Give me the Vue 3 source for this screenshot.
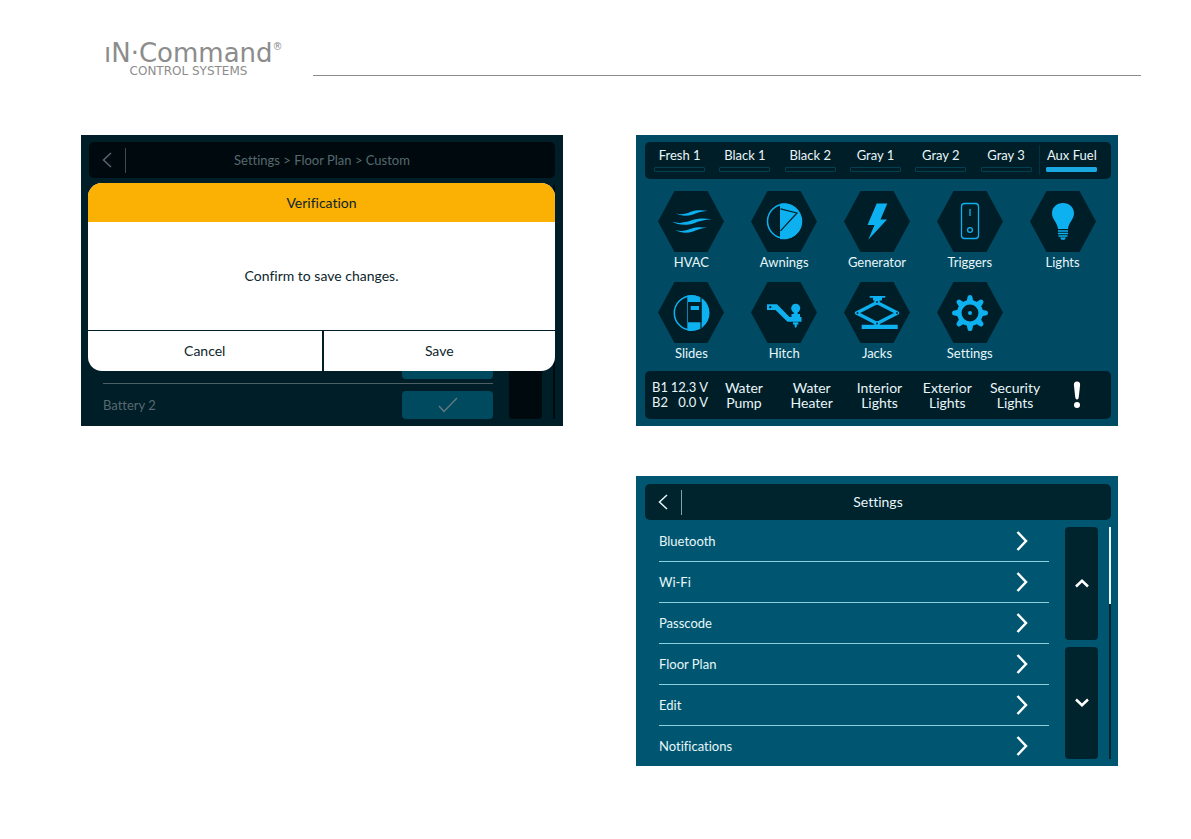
<template>
  <div class="page">
    <header class="page-header">
      <div class="brand">
        <div class="brand-name">ıN·Command<sup class="brand-mark">®</sup></div>
        <div class="brand-sub">CONTROL SYSTEMS</div>
      </div>
      <div class="page-rule"></div>
    </header>

    <main class="screens">
      <!-- Confirmation over the floor plan list -->
      <section class="screen screen-dimmed">
        <div class="title-bar">
          <button class="back" type="button" aria-label="Back">
            <svg width="10" height="16" viewBox="0 0 10 16"><path d="M9 1 L1.5 8 L9 15" /></svg>
          </button>
          <h2 class="title">Settings &gt; Floor Plan &gt; Custom</h2>
        </div>
        <div class="list-area">
          <ul class="list list-bottom">
            <li class="row"><span class="toggle"></span></li>
            <li class="row">
              <span>Battery 2</span>
              <button class="toggle" type="button" aria-label="Battery 2">
                <svg width="20" height="16" viewBox="0 0 20 16"><path d="M1 9 L6 14.5 L19 1" /></svg>
              </button>
            </li>
          </ul>
          <div class="keys"><div class="key"></div></div>
          <div class="track"></div>
        </div>

        <div class="modal" role="dialog" aria-labelledby="modal-title">
          <h3 id="modal-title" class="modal-title">Verification</h3>
          <p class="modal-text">Confirm to save changes.</p>
          <div class="modal-actions">
            <button class="modal-button" type="button">Cancel</button>
            <button class="modal-button" type="button">Save</button>
          </div>
        </div>
      </section>

      <!-- Home -->
      <section class="screen screen-home">
        <div class="tanks">
          <div v-for="tank in tanks" :key="tank.name" class="tank" :class="{ fuel: tank.fuel }">
            <span>{{ tank.name }}</span>
            <div class="gauge">
              <div class="gauge-level" :style="{ width: tank.level + '%' }"></div>
            </div>
          </div>
        </div>

        <nav class="tiles">
          <button v-for="tile in tiles" :key="tile" class="tile" type="button">
            <svg class="hex" width="66" height="61" viewBox="0 0 66 61">
              <polygon class="hex-bg" points="16.5,0 49.5,0 66,30.5 49.5,61 16.5,61 0,30.5" />
              <g v-if="tile === 'HVAC'">
                <path d="M17.5 22.3 C24 24.5 28 22.5 33 20.8 C38 19 43 19 49.5 19.8 C43 20.5 39 22 35 23.4 C29 25.3 23 25.3 17.5 22.3 Z" />
                <path d="M14 30.8 C22 33 27 31.5 33 29.6 C40 27.3 46 27.2 53.5 28.3 C46 28.9 41 30.3 36 32.2 C29 34.6 20 34.4 14 30.8 Z" />
                <path d="M17.5 39 C24 41 28 39.3 33 37.8 C38 36 43 36 49 36.8 C43 37.4 39 39 35 40.4 C29 42.3 23 42.2 17.5 39 Z" />
              </g>
              <g v-else-if="tile === 'Awnings'">
                <circle class="line" cx="33.5" cy="30.3" r="17" />
                <path d="M29 12.7 A18 18 0 1 1 29 47.9 Z" />
                <path class="cut" d="M29.5 17.8 L46 22 L29.5 39.8" />
              </g>
              <path
                v-else-if="tile === 'Generator'"
                d="M32.7 12.5 H43.3 L36.5 28.5 H43 L24.3 48.7 L30.5 34 H23.5 Z"
              />
              <g v-else-if="tile === 'Triggers'">
                <rect class="thin" x="24.5" y="12.5" width="17" height="35" rx="3" />
                <path class="thin" d="M33 18 V25" />
                <circle class="thin" cx="33" cy="39" r="2.4" />
              </g>
              <g v-else-if="tile === 'Lights'">
                <path d="M33 12 C26.5 12 22 16.6 22 22.5 C22 28.5 27.5 31.5 28 38 H38 C38.5 31.5 44 28.5 44 22.5 C44 16.6 39.5 12 33 12 Z" />
                <path class="thin" d="M28 40 H38 M28 42.5 H38 M28.5 45 H37.5" />
                <path d="M30 46.5 H36 L34.5 48.7 H31.5 Z" />
              </g>
              <g v-else-if="tile === 'Slides'">
                <circle class="line" cx="33.3" cy="31" r="17" />
                <path d="M29.3 13.5 A18 18 0 1 1 29.3 48.5 Z" />
                <path class="hex-bg" d="M30 20 H42 Q43.5 20 43.5 21.5 V40.3 H30 Z" />
                <path class="cut" d="M43 15.5 V46.5" />
                <rect x="32.7" y="24" width="8.3" height="4" />
              </g>
              <g v-else-if="tile === 'Hitch'">
                <path d="M16 22.3 H26 L38.5 35 H50.5 V39.7 H36.5 L24.5 28 H16 Z" />
                <circle cx="44.7" cy="26.2" r="4.5" />
                <path d="M42.7 29.5 H46.7 V32 H49 V35.5 H40.5 V32 H42.7 Z" />
                <path d="M42 40.3 H47.4 V42.5 H45.8 V44.5 L44.7 46 L43.6 44.5 V42.5 H42 Z" />
                <circle class="hex-bg" cx="19.3" cy="25.2" r="1.1" />
              </g>
              <g v-else-if="tile === 'Jacks'">
                <path d="M25.7 14 H41.3 V15.7 H38 V18.5 H29 V15.7 H25.7 Z M17.7 42.7 H53.7 V47 H17.7 Z" />
                <path class="beam" d="M33 20.5 L53.5 31 L33 41.5 L12.5 31 Z" />
                <circle cx="33" cy="20" r="2.8" />
                <circle cx="33" cy="42" r="2.8" />
                <g class="hex-bg">
                  <circle cx="33" cy="20" r="0.9" />
                  <circle cx="33" cy="41.5" r="0.9" />
                  <circle cx="13.5" cy="31" r="0.9" />
                  <circle cx="53" cy="31" r="0.9" />
                </g>
              </g>
              <g v-else>
                <path
                  v-for="n in 8"
                  :key="n"
                  :transform="`rotate(${n * 45} 33 31)`"
                  d="M29.5 20 L30.7 14.5 Q31 13 33 13 Q35 13 35.3 14.5 L36.5 20 Z"
                />
                <circle class="ring" cx="33" cy="31" r="10.7" />
                <circle cx="33" cy="31" r="2" />
              </g>
            </svg>
            <span>{{ tile }}</span>
          </button>
        </nav>

        <div class="status">
          <table class="batteries">
            <tbody>
              <tr v-for="b in batteries" :key="b.name">
                <th scope="row">{{ b.name }}</th>
                <td>{{ b.volts }} V</td>
              </tr>
            </tbody>
          </table>
          <button v-for="s in switches" :key="s.join()" class="switch" type="button">
            {{ s[0] }}<br />{{ s[1] }}
          </button>
          <button class="switch alert" type="button" aria-label="Alerts">
            <svg width="8" height="28" viewBox="0 0 8 28">
              <path d="M4 0.5 Q7.3 0.5 7.1 4 L5.8 16 Q5.5 18.5 4 18.5 Q2.5 18.5 2.2 16 L0.9 4 Q0.7 0.5 4 0.5 Z" />
              <circle cx="4" cy="24" r="3" />
            </svg>
          </button>
        </div>
      </section>

      <!-- Settings -->
      <section class="screen screen-settings">
        <div class="title-bar">
          <button class="back" type="button" aria-label="Back">
            <svg width="10" height="16" viewBox="0 0 10 16"><path d="M9 1 L1.5 8 L9 15" /></svg>
          </button>
          <h2 class="title">Settings</h2>
        </div>
        <div class="list-area">
          <ul class="list">
            <li v-for="item in settings" :key="item" class="row">
              <a class="row-link" href="#">
                <span>{{ item }}</span>
                <svg width="12" height="20" viewBox="0 0 12 20"><path d="M1.5 1 L10 10 L1.5 19" /></svg>
              </a>
            </li>
          </ul>
          <div class="keys">
            <button class="key" type="button" aria-label="Scroll up">
              <svg width="14" height="9" viewBox="0 0 14 9"><path d="M1 7.5 L7 1.8 L13 7.5" /></svg>
            </button>
            <button class="key" type="button" aria-label="Scroll down">
              <svg width="14" height="9" viewBox="0 0 14 9"><path d="M1 1.5 L7 7.2 L13 1.5" /></svg>
            </button>
          </div>
          <div class="track"><div class="thumb"></div></div>
        </div>
      </section>
    </main>
  </div>
</template>

<script setup>
const tanks = [
  { name: 'Fresh 1', level: 0 },
  { name: 'Black 1', level: 0 },
  { name: 'Black 2', level: 0 },
  { name: 'Gray 1', level: 0 },
  { name: 'Gray 2', level: 0 },
  { name: 'Gray 3', level: 0 },
  { name: 'Aux Fuel', level: 100, fuel: true },
]

const tiles = [
  'HVAC',
  'Awnings',
  'Generator',
  'Triggers',
  'Lights',
  'Slides',
  'Hitch',
  'Jacks',
  'Settings',
]

const batteries = [
  { name: 'B1', volts: '12.3' },
  { name: 'B2', volts: '0.0' },
]

const switches = [
  ['Water', 'Pump'],
  ['Water', 'Heater'],
  ['Interior', 'Lights'],
  ['Exterior', 'Lights'],
  ['Security', 'Lights'],
]

const settings = ['Bluetooth', 'Wi-Fi', 'Passcode', 'Floor Plan', 'Edit', 'Notifications']
</script>

<style>
body {
  margin: 0;
  background: #fff;
}
</style>

<style scoped>
.page {
  box-sizing: border-box;
  padding: 40px 73px 40px 81px;
  font-family: Lato, 'Noto Sans', sans-serif;
  font-size: 13px;
  font-variant-ligatures: none;
  line-height: 20px;
}

button {
  padding: 0;
  border: 0;
  background: none;
  color: inherit;
  font: inherit;
  font-variant-ligatures: none;
  cursor: pointer;
}

svg {
  display: block;
}

/* Header */
.page-header {
  display: flex;
  align-items: flex-end;
  gap: 30px;
  height: 36px;
  margin: 0 -23px 59px 23px;
}

.brand {
  width: 179px;
  color: #8c8c8c;
  font-family: 'DejaVu Sans', sans-serif;
  white-space: nowrap;
}

.brand-name {
  display: flex;
  font-size: 26px;
  line-height: 26px;
}

.brand-mark {
  font-size: 10px;
  line-height: 14px;
}

.brand-sub {
  padding-right: 10px;
  font-size: 12px;
  line-height: 10px;
  text-align: center;
}

.page-rule {
  flex: 1;
  border-bottom: 1px solid #8c8c8c;
}

/* Screens */
.screens {
  display: grid;
  grid-template-columns: 1fr 1fr;
  gap: 50px 73px;
}

.screen {
  position: relative;
  display: flex;
  flex-direction: column;
  box-sizing: border-box;
  padding: 8px 7px 0 9px;
  color: #e8f6fa;
}

.screen-dimmed {
  padding: 7px 8px 0;
  background: #001e27;
  color: #57696f;
}

.screen-home {
  padding: 7px 7px 7px 9px;
  background: #004b63;
}

.screen-settings {
  grid-column: 2;
  background: #005670;
}

.title-bar {
  display: flex;
  align-items: center;
  height: 36px;
  margin-bottom: 1px;
  border-radius: 5px;
  background: #00242d;
}

.screen-dimmed .title-bar {
  background: #00090d;
}

.back {
  display: flex;
  align-items: center;
  width: 37px;
  height: 25px;
  box-sizing: border-box;
  padding-left: 13px;
  border-right: 1px solid #7fa3ac;
}

.screen-dimmed .back {
  border-color: #3c4b50;
}

.back path {
  fill: none;
  stroke: currentColor;
  stroke-width: 1.5;
}

.title {
  flex: 1;
  margin: 0;
  padding-right: 37px;
  font-size: 14px;
  font-weight: 400;
  text-align: center;
}

.screen-dimmed .title {
  font-size: 13px;
}

.list-area {
  display: flex;
  flex: 1;
  padding-left: 14px;
}

.list {
  display: flex;
  flex: 1;
  flex-direction: column;
  margin: 0;
  padding: 0;
  list-style: none;
}

.list-bottom {
  justify-content: flex-end;
}

.row {
  display: flex;
  align-items: center;
  justify-content: space-between;
  box-sizing: border-box;
  height: 41px;
  border-bottom: 1px solid #8fd0dd;
}

.row:last-child {
  height: 40px;
  border-bottom: 0;
}

.screen-dimmed .row {
  border-color: #4d6066;
}

.list-bottom .row:first-child {
  padding-top: 4px;
}

.list-bottom .row:last-child {
  height: 42px;
}

.row-link {
  display: flex;
  flex: 1;
  align-items: center;
  justify-content: space-between;
  padding-right: 21px;
  color: inherit;
  text-decoration: none;
}

.row-link path {
  fill: none;
  stroke: #fff;
  stroke-width: 2.5;
}

.toggle {
  display: flex;
  align-items: center;
  justify-content: center;
  width: 91px;
  height: 28px;
  margin-left: auto;
  border-radius: 4px;
  background: #004a60;
}

.toggle path {
  fill: none;
  stroke: #64777e;
  stroke-width: 1.5;
}

.keys {
  display: flex;
  flex-direction: column;
  gap: 7px;
  width: 33px;
  margin: 6px 11px 7px 16px;
}

.key {
  display: flex;
  flex: 1;
  align-items: center;
  justify-content: center;
  border-radius: 4px;
  background: #00242d;
}

.key path {
  fill: none;
  stroke: #fff;
  stroke-width: 2.5;
}

.screen-dimmed .key {
  background: #00090d;
}

.track {
  width: 2px;
  margin: 6px 0 7px;
  background: #00242d;
}

.screen-dimmed .track {
  background: #00090d;
}

.thumb {
  height: 33%;
  background: #e8f6fa;
}

/* Modal */
.modal {
  position: absolute;
  top: 48px;
  right: 8px;
  left: 7px;
  overflow: hidden;
  border-radius: 14px;
  background: #fff;
  color: #0c252d;
  font-size: 14px;
}

.modal-title {
  margin: 0;
  background: #fbb103;
  font-size: 14px;
  font-weight: 400;
  line-height: 39px;
  text-align: center;
}

.modal-text {
  margin: 0;
  line-height: 108px;
  text-align: center;
}

.modal-actions {
  display: grid;
  grid-template-columns: 1fr 1fr;
  border-top: 1px solid #001e27;
}

.modal-button {
  height: 40px;
}

.modal-button + .modal-button {
  border-left: 2px solid #001e27;
}

/* Home */
.tanks {
  display: grid;
  grid-template-columns: repeat(7, 1fr);
  box-sizing: border-box;
  height: 37px;
  padding: 3px 7px 0 2px;
  border-radius: 5px;
  background: #001e27;
  text-align: center;
}

.tank {
  display: flex;
  flex-direction: column;
  align-items: center;
  height: 30px;
}

.gauge {
  box-sizing: border-box;
  width: 51px;
  height: 5px;
  margin-top: 2px;
  border: 1px solid #004050;
  border-radius: 1px;
}

.gauge-level {
  height: 3px;
  background: #1ba8e0;
}

.fuel {
  border-left: 1px solid #003342;
}

.fuel .gauge {
  border-color: #1ba8e0;
}

.tiles {
  display: grid;
  grid-template-columns: repeat(5, 1fr);
  row-gap: 10px;
  padding: 12px 2px 8px 0;
}

.tile {
  display: flex;
  flex-direction: column;
  align-items: center;
}

.hex {
  fill: #0db1ef;
}

.hex-bg {
  fill: #001e27;
}

.line {
  fill: none;
  stroke: #0db1ef;
  stroke-width: 1.5;
}

.thin {
  fill: none;
  stroke: #0db1ef;
  stroke-width: 1.3;
}

.cut {
  fill: none;
  stroke: #001e27;
  stroke-width: 1.2;
}

.beam {
  fill: none;
  stroke: #0db1ef;
  stroke-linejoin: round;
  stroke-width: 3.5;
}

.ring {
  fill: none;
  stroke: #0db1ef;
  stroke-width: 4.5;
}

.status {
  display: grid;
  grid-template-columns: 65px repeat(5, 1fr) 62px;
  align-items: center;
  height: 48px;
  border-radius: 5px;
  background: #001e27;
}

.batteries {
  width: 56px;
  margin-left: 7px;
  border-collapse: collapse;
  line-height: 15px;
  white-space: nowrap;
}

.batteries th,
.batteries td {
  padding: 0;
  font-weight: 400;
  text-align: left;
}

.batteries td {
  text-align: right;
}

.switch {
  font-size: 14px;
  line-height: 15px;
  text-align: center;
}

.alert {
  display: flex;
  justify-content: center;
  padding-right: 6px;
}

.alert svg {
  fill: #fff;
}
</style>
